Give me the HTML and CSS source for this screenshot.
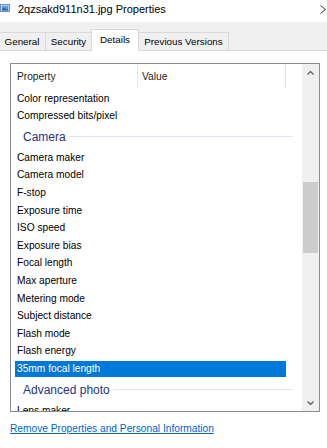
FILE: index.html
```html
<!DOCTYPE html>
<html lang="en">

<head>
    <meta charset="UTF-8">
    <meta name="viewport" content="width=device-width">
    <title>2qzsakd911n31.jpg Properties</title>
    <link rel="stylesheet" href="styles.css">
</head>

<body>
    <div class="window">
        <div class="titlebar">
            <svg class="file-icon" width="10" height="10" viewBox="0 0 10 10">
                <rect x="0.5" y="1.5" width="9" height="7" fill="#fff" stroke="#6e8fbf" />
                <rect x="1.5" y="2.5" width="7" height="5" fill="#5ea0e6" />
                <path d="M1.5 7.5 L4 4.5 L6 6.5 L7 5.5 L8.5 7.5 Z" fill="#1c5aa6" />
            </svg>
            <span class="title">2qzsakd911n31.jpg Properties</span>
            <svg class="close" width="6" height="9" viewBox="0 0 6 9">
                <path d="M0.5 0.5 L5.5 4.5 L0.5 8.5" fill="none" stroke="#333" stroke-width="1" />
            </svg>
        </div>

        <div class="tabs">
            <div class="tab tab-general">General</div>
            <div class="tab tab-security">Security</div>
            <div class="tab tab-details active">Details</div>
            <div class="tab tab-versions">Previous Versions</div>
        </div>

        <div class="page">
            <div class="listview">
                <div class="list">
                    <div class="list-header">
                        <div class="col col-name">Property</div>
                        <div class="col col-value">Value</div>
                    </div>
                    <div class="row">Color representation</div>
                    <div class="row">Compressed bits/pixel</div>
                    <div class="group"><span class="group-label">Camera</span><span class="group-line"></span></div>
                    <div class="row">Camera maker</div>
                    <div class="row">Camera model</div>
                    <div class="row">F-stop</div>
                    <div class="row">Exposure time</div>
                    <div class="row">ISO speed</div>
                    <div class="row">Exposure bias</div>
                    <div class="row">Focal length</div>
                    <div class="row">Max aperture</div>
                    <div class="row">Metering mode</div>
                    <div class="row">Subject distance</div>
                    <div class="row">Flash mode</div>
                    <div class="row">Flash energy</div>
                    <div class="row selected">35mm focal length</div>
                    <div class="group"><span class="group-label">Advanced photo</span><span class="group-line"></span></div>
                    <div class="row">Lens maker</div>
                </div>

                <div class="scrollbar">
                    <div class="scroll-btn">
                        <svg width="7" height="4" viewBox="0 0 7 4">
                            <path d="M0.5 3.5 L3.5 0.5 L6.5 3.5" fill="none" stroke="#606060" stroke-width="1.3" />
                        </svg>
                    </div>
                    <div class="scroll-thumb"></div>
                    <div class="scroll-btn scroll-down">
                        <svg width="7" height="4" viewBox="0 0 7 4">
                            <path d="M0.5 0.5 L3.5 3.5 L6.5 0.5" fill="none" stroke="#606060" stroke-width="1.3" />
                        </svg>
                    </div>
                </div>
            </div>

            <a href="#" class="remove-link">Remove Properties and Personal Information</a>
        </div>
    </div>
</body>

</html>
```

FILE: styles.css
```css
body {
    margin: 0;
    font-family: "Liberation Sans", Arial, sans-serif;
    background-color: #fff;
    color: #000;
}

.window {
    width: 327px;
    height: 448px;
    overflow: hidden;
    background-color: #fff;
}

/* title bar */
.titlebar {
    height: 22px;
    box-sizing: border-box;
    padding-top: 2px;
    display: flex;
    align-items: flex-start;
    background-color: #fff;
}

.file-icon {
    margin-top: 1px;
    flex-shrink: 0;
}

.title {
    margin-left: 8px;
    font-size: 11px;
    line-height: 14px;
    white-space: nowrap;
}

.close {
    margin-left: auto;
    margin-right: 1px;
    margin-top: 3px;
}

/* tabs */
.tabs {
    height: 28px;
    display: flex;
    align-items: flex-end;
    background-color: #f0f0f0;
    border-bottom: 1px solid #d9d9d9;
}

.tab {
    box-sizing: border-box;
    height: 18px;
    line-height: 17px;
    font-size: 9.8px;
    text-align: center;
    white-space: nowrap;
    background-color: #f0f0f0;
    border: 1px solid #d9d9d9;
    border-bottom: none;
    margin-left: -1px;
}

.tab-general {
    margin-left: -2px;
    width: 48px;
}

.tab-security {
    width: 47px;
}

.tab-details {
    width: 48px;
}

.tab-versions {
    width: 91px;
}

.tab.active {
    height: 22px;
    line-height: 19px;
    margin-bottom: -1px;
    background-color: #fff;
}

/* page */
.page {
    padding: 12px 0 0 10px;
}

.listview {
    display: flex;
    width: 310px;
    height: 349px;
    box-sizing: border-box;
    border: 1px solid #8c8c8c;
    overflow: hidden;
    background-color: #fff;
}

.list {
    flex: 1;
    overflow: hidden;
    font-size: 10.2px;
}

.list-header {
    display: flex;
    height: 25.5px;
    line-height: 25px;
}

.col {
    box-sizing: border-box;
    height: 24px;
    border-right: 1px solid #e5e5e5;
    color: #222;
}

.col-name {
    width: 127px;
    padding-left: 6px;
}

.col-value {
    width: 148px;
    padding-left: 4px;
}

.row {
    box-sizing: border-box;
    height: 17.6px;
    line-height: 17.6px;
    padding-left: 6px;
    white-space: nowrap;
}

.row.selected {
    margin-left: 4px;
    width: 271px;
    padding-left: 2px;
    line-height: 15.6px;
    border-top: 1px solid transparent;
    border-bottom: 1px solid transparent;
    background-clip: padding-box;
    background-color: #0078d7;
    color: #fff;
}

.group {
    height: 24.2px;
    display: flex;
    align-items: center;
    padding: 0 9px 0 12px;
}

.group-label {
    font-size: 12px;
    color: #1e3287;
    white-space: nowrap;
}

.group-line {
    flex: 1;
    height: 1px;
    margin-left: 3px;
    background-color: #e2e5f0;
}

/* scrollbar */
.scrollbar {
    width: 17px;
    display: flex;
    flex-direction: column;
    align-items: center;
    background-color: #f0f0f0;
}

.scroll-btn {
    height: 17px;
    width: 17px;
    display: flex;
    align-items: center;
    justify-content: center;
}

.scroll-thumb {
    width: 15px;
    height: 71px;
    margin-top: 101px;
    background-color: #cdcdcd;
}

.scroll-down {
    margin-top: auto;
}

a.remove-link {
    display: inline-block;
    margin-top: 10px;
    font-size: 10.2px;
    line-height: 14px;
    color: #0066cc;
    text-decoration: underline;
    white-space: nowrap;
}
```
